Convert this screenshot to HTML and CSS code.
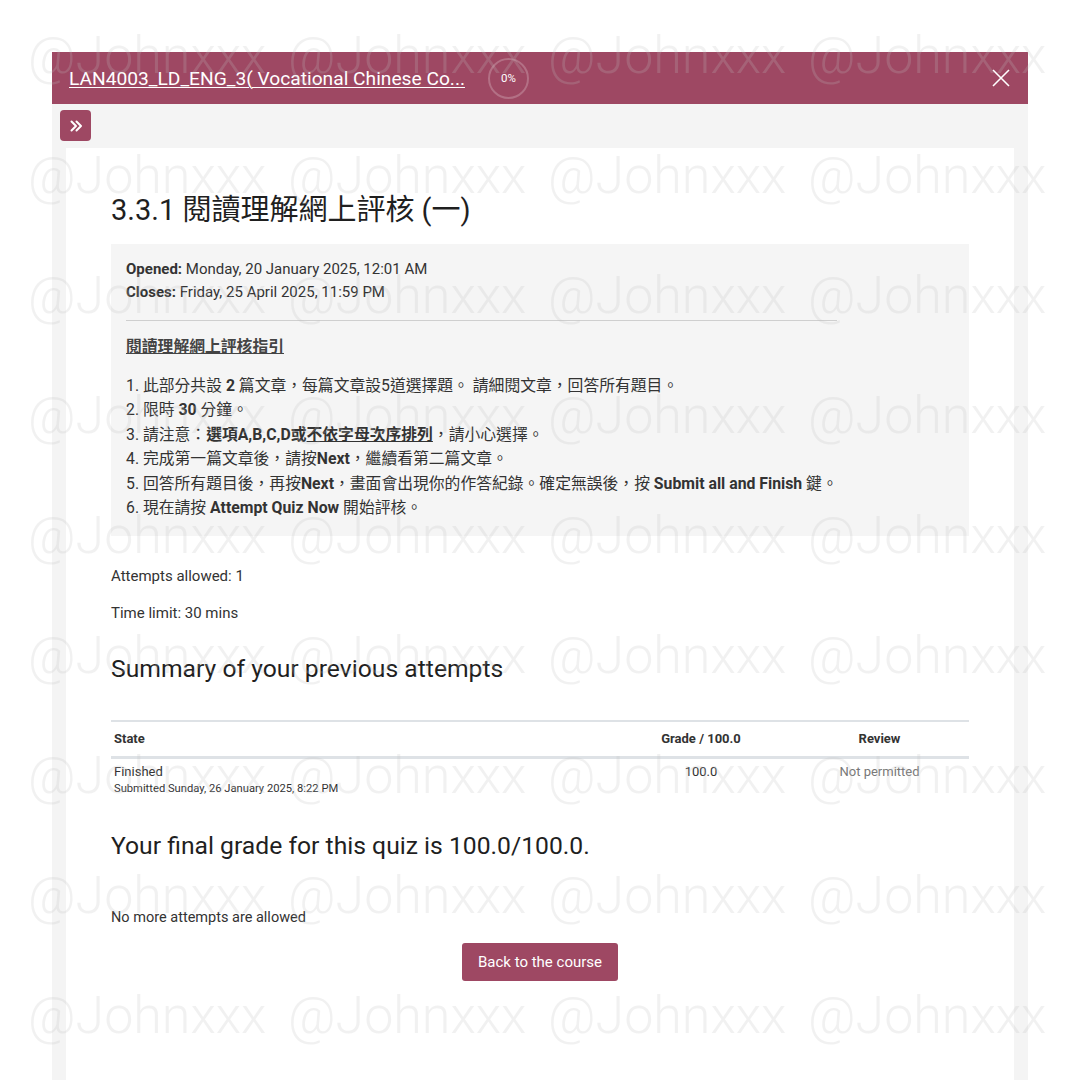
FILE: index.html
```html
<!DOCTYPE html>
<html lang="en">
<head>
    <meta charset="UTF-8">
    <meta name="viewport" content="width=device-width, initial-scale=1.0">
    <title>3.3.1 閱讀理解網上評核 (一)</title>
    <link rel="stylesheet" href="styles.css">
</head>
<body>
    <div class="frame">
        <!-- Course header -->
        <div class="topbar">
            <a class="course-link" href="#">LAN4003_LD_ENG_3( Vocational Chinese Co...</a>
            <div class="progress-ring">0%</div>
            <a class="close-btn" href="#" aria-label="Close">
                <svg width="18" height="18" viewBox="0 0 18 18">
                    <path d="M1 1 L17 17 M17 1 L1 17" stroke="#fff" stroke-width="1.6" fill="none"/>
                </svg>
            </a>
        </div>

        <div class="drawer-area">
            <button class="drawer-toggle" aria-label="Open index">
                <svg width="14" height="14" viewBox="0 0 14 14">
                    <path d="M2.5 2.5 L7 7 L2.5 11.5 M7.5 2.5 L12 7 L7.5 11.5" stroke="#fff" stroke-width="2" fill="none" stroke-linecap="round" stroke-linejoin="round"/>
                </svg>
            </button>

            <div class="card">
                <h2 class="quiz-title" lang="zh-TW">3.3.1 閱讀理解網上評核 (一)</h2>

                <div class="info-box" lang="zh-TW">
                    <p class="dates"><b>Opened:</b> Monday, 20 January 2025, 12:01 AM<br><b>Closes:</b> Friday, 25 April 2025, 11:59 PM</p>
                    <hr>
                    <p class="guide-title">閱讀理解網上評核指引</p>
                    <div class="guide-list">
                        <div>1. 此部分共設 <b>2</b> 篇文章，每篇文章設5道選擇題。 請細閱文章，回答所有題目。</div>
                        <div>2. 限時 <b>30</b> 分鐘。</div>
                        <div>3. 請注意：<b>選項A,B,C,D或<u>不依字母次序排列</u></b>，請小心選擇。</div>
                        <div>4. 完成第一篇文章後，請按<b>Next</b>，繼續看第二篇文章。</div>
                        <div>5. 回答所有題目後，再按<b>Next</b>，畫面會出現你的作答紀錄。確定無誤後，按 <b>Submit all and Finish</b> 鍵。</div>
                        <div>6. 現在請按 <b>Attempt Quiz Now</b> 開始評核。</div>
                    </div>
                </div>

                <p class="meta first">Attempts allowed: 1</p>
                <p class="meta">Time limit: 30 mins</p>

                <h3 class="section-title">Summary of your previous attempts</h3>

                <table class="attempts">
                    <thead>
                        <tr>
                            <th class="col-state">State</th>
                            <th class="col-grade">Grade / 100.0</th>
                            <th class="col-review">Review</th>
                        </tr>
                    </thead>
                    <tbody>
                        <tr>
                            <td class="col-state">Finished<span class="submitted">Submitted Sunday, 26 January 2025, 8:22 PM</span></td>
                            <td class="col-grade">100.0</td>
                            <td class="col-review muted">Not permitted</td>
                        </tr>
                    </tbody>
                </table>

                <h3 class="final-grade">Your final grade for this quiz is 100.0/100.0.</h3>

                <p class="no-more">No more attempts are allowed</p>
                <div class="actions">
                    <button class="back-btn">Back to the course</button>
                </div>
            </div>
        </div>
    </div>

    <!-- Watermark overlay -->
    <div class="watermark">
        <div class="wm-row"><span>@Johnxxx</span><span>@Johnxxx</span><span>@Johnxxx</span><span>@Johnxxx</span></div>
        <div class="wm-row"><span>@Johnxxx</span><span>@Johnxxx</span><span>@Johnxxx</span><span>@Johnxxx</span></div>
        <div class="wm-row"><span>@Johnxxx</span><span>@Johnxxx</span><span>@Johnxxx</span><span>@Johnxxx</span></div>
        <div class="wm-row"><span>@Johnxxx</span><span>@Johnxxx</span><span>@Johnxxx</span><span>@Johnxxx</span></div>
        <div class="wm-row"><span>@Johnxxx</span><span>@Johnxxx</span><span>@Johnxxx</span><span>@Johnxxx</span></div>
        <div class="wm-row"><span>@Johnxxx</span><span>@Johnxxx</span><span>@Johnxxx</span><span>@Johnxxx</span></div>
        <div class="wm-row"><span>@Johnxxx</span><span>@Johnxxx</span><span>@Johnxxx</span><span>@Johnxxx</span></div>
        <div class="wm-row"><span>@Johnxxx</span><span>@Johnxxx</span><span>@Johnxxx</span><span>@Johnxxx</span></div>
        <div class="wm-row"><span>@Johnxxx</span><span>@Johnxxx</span><span>@Johnxxx</span><span>@Johnxxx</span></div>
    </div>
</body>
</html>
```

FILE: styles.css
```css
html, body {
    height: 100%;
}
body {
    margin: 0;
    background: #fff;
    color: #262626;
    font-family: Roboto, "Noto Sans CJK TC", sans-serif;
    font-size: 15px;
    overflow: hidden;
}
.frame {
    margin: 52px 52px 0;
    height: calc(100% - 52px);
    display: flex;
    flex-direction: column;
}
.topbar {
    height: 52px;
    flex-shrink: 0;
    background: #9e4863;
    display: flex;
    align-items: center;
    padding: 0 17px;
}
.course-link {
    color: #fff;
    font-size: 19.2px;
    text-decoration: underline;
    text-decoration-thickness: 1px;
    text-underline-offset: 2px;
}
.progress-ring {
    width: 37px;
    height: 37px;
    margin-left: 23px;
    border: 2px solid rgba(255, 255, 255, 0.22);
    border-radius: 50%;
    display: flex;
    align-items: center;
    justify-content: center;
    color: #fff;
    font-size: 11.5px;
}
.close-btn {
    margin-left: auto;
    display: flex;
    margin-right: 1px;
}
.drawer-area {
    flex: 1;
    background: #f4f4f4;
    padding: 6px 14px 0;
    display: flex;
    flex-direction: column;
}
.drawer-toggle {
    width: 31px;
    height: 31px;
    margin-left: -6px;
    border: none;
    border-radius: 4px;
    background: #9e4863;
    display: flex;
    align-items: center;
    justify-content: center;
    padding: 0;
}
.card {
    flex: 1;
    margin-top: 7px;
    background: #fff;
    padding: 45px 45px 0;
}
.quiz-title {
    margin: 0;
    font-size: 29px;
    font-weight: 400;
    line-height: 34px;
    color: #1f1f1f;
}
.info-box {
    margin-top: 17px;
    background: #f5f5f5;
    padding: 14px 15px 16px;
    line-height: 23px;
    color: #333;
}
.info-box p {
    margin: 0;
}
.info-box hr {
    width: 711px;
    margin: 16px 0 14px;
    border: none;
    border-top: 1px solid #cfcfcf;
}
.guide-title {
    font-size: 15.8px;
    font-weight: 700;
    text-decoration: underline;
    color: #444;
}
.guide-list {
    margin-top: 16px;
    font-size: 15.8px;
    line-height: 24.4px;
}
.meta {
    margin: 14px 0 0;
    line-height: 23px;
    color: #333;
}
.meta.first {
    margin-top: 29px;
}
.section-title {
    margin: 29px 0 0;
    font-size: 24.7px;
    font-weight: 400;
    line-height: 29px;
    color: #1f1f1f;
}
.attempts {
    width: 100%;
    margin-top: 37px;
    border-collapse: collapse;
    font-size: 13px;
    color: #333;
}
.attempts th {
    border-top: 2px solid #dee2e6;
    border-bottom: 3px solid #dee2e6;
    padding: 8px 3px 9px;
    line-height: 17px;
    font-weight: 700;
}
.attempts td {
    padding: 4px 3px 3px;
    line-height: 18px;
    vertical-align: top;
}
.col-state {
    text-align: left;
}
.col-grade {
    width: 172px;
    text-align: center;
}
.col-review {
    width: 173px;
    text-align: center;
}
.submitted {
    display: block;
    font-size: 11.2px;
    line-height: 16px;
}
.muted {
    color: #777;
}
.final-grade {
    margin: 31px 0 0;
    font-size: 24.7px;
    font-weight: 400;
    line-height: 29px;
    color: #1f1f1f;
}
.no-more {
    margin: 47px 0 0;
    font-size: 14.5px;
    line-height: 22px;
    color: #333;
}
.actions {
    display: flex;
    justify-content: center;
    margin-top: 14px;
}
.back-btn {
    width: 156px;
    height: 38px;
    border: none;
    border-radius: 3px;
    background: #9e4863;
    color: #fff;
    font-family: Roboto, sans-serif;
    font-size: 15px;
}
.watermark {
    position: absolute;
    top: -5px;
    left: 0;
    width: 100%;
    pointer-events: none;
    overflow: hidden;
}
.wm-row {
    display: flex;
    height: 120px;
    align-items: center;
    padding-left: 28px;
}
.wm-row span {
    flex: 0 0 260px;
    font-family: Roboto, sans-serif;
    font-size: 52px;
    font-weight: 300;
    color: rgba(190, 190, 190, 0.22);
    white-space: nowrap;
}
```
